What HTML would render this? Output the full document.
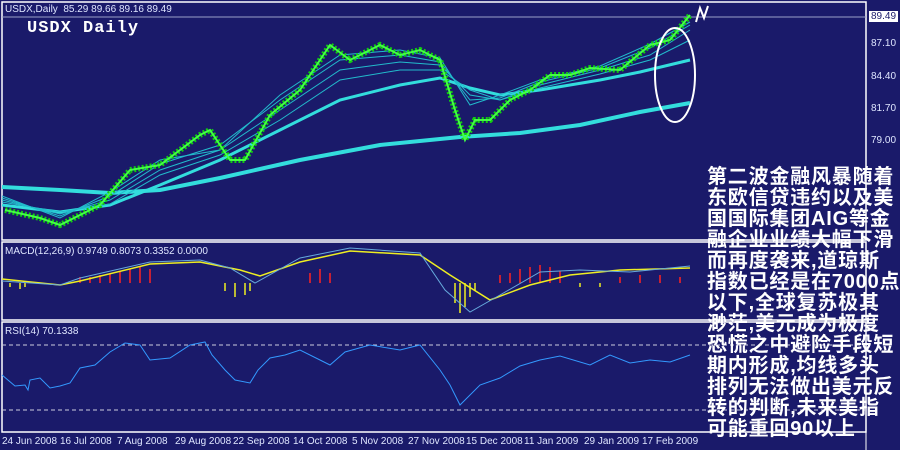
<!DOCTYPE html>
<html><head><meta charset="utf-8"><style>
html,body{margin:0;padding:0;background:#1a1a6a;width:900px;height:450px;overflow:hidden;position:relative}
.t{position:absolute;font-family:"Liberation Sans",sans-serif;color:#dfe6ff;font-size:10px;white-space:nowrap}
.cn{position:absolute;left:707px;top:167px;font-family:"Liberation Sans","WenQuanYi Zen Hei","Noto Sans CJK SC",sans-serif;font-size:20px;line-height:21px;color:#fff;font-weight:bold;letter-spacing:0.8px;white-space:nowrap}
</style></head><body>
<svg width="900" height="450" style="position:absolute;left:0;top:0">
<g fill="none" stroke="#fff" stroke-width="1.5">
<rect x="2" y="2" width="864" height="238"/>
<rect x="2" y="242" width="864" height="78"/>
<rect x="2" y="322" width="864" height="110"/>
</g>
<line x1="2" y1="17" x2="866" y2="17" stroke="#9aa0c8"/>
<polyline fill="none" stroke="#3dd" stroke-width="4" points="2,187 60,190 110,193 160,190 220,178 300,160 380,145 460,137 520,133 580,125 640,112 690,103"/>
<polyline fill="none" stroke="#3dd" stroke-width="3" points="2,205 60,212 110,205 160,185 220,160 280,130 340,100 400,85 440,78 470,88 500,95 540,90 600,80 640,72 690,60"/>
<g fill="none" stroke="#2bc" stroke-width="1">
<polyline points="2,200 60,214 110,200 160,170 220,150 280,110 340,70 400,62 440,65 470,95 500,100 540,85 600,70 650,55 690,30"/>
<polyline points="2,198 60,216 110,196 160,164 220,145 280,100 340,60 400,55 440,62 470,100 500,98 540,82 600,68 650,48 690,25"/>
<polyline points="2,196 60,218 110,192 160,160 220,150 280,95 340,55 400,50 440,58 470,105 500,95 540,80 600,66 650,44 690,22"/>
<polyline points="2,202 60,212 110,204 160,175 220,155 280,120 340,80 400,70 440,70 470,90 500,100 540,88 600,74 650,60 690,40"/>
</g>
<polyline fill="none" stroke="#1c1" stroke-width="6" stroke-dasharray="2 2" points="5,210 40,218 60,225 100,205 130,170 160,165 200,135 210,130 230,160 245,160 270,115 300,90 330,45 350,60 380,45 400,55 420,50 440,60 455,110 465,140 475,120 490,120 510,100 530,90 550,75 570,75 590,68 620,70 650,45 670,40 690,15"/>
<polyline fill="none" stroke="#4f4" stroke-width="2" points="5,210 40,218 60,225 100,205 130,170 160,165 200,135 210,130 230,160 245,160 270,115 300,90 330,45 350,60 380,45 400,55 420,50 440,60 455,110 465,140 475,120 490,120 510,100 530,90 550,75 570,75 590,68 620,70 650,45 670,40 690,15"/>
<ellipse cx="675" cy="75" rx="20" ry="47" fill="none" stroke="#fff" stroke-width="2"/>
<path d="M696,22 L700,8 L704,18 L708,6" fill="none" stroke="#fff" stroke-width="2"/>
<g stroke="#f22" stroke-width="1.5">
<path d="M80,283v-6M90,283v-6M100,283v-8M110,283v-10M120,283v-12M130,283v-14M140,283v-16M150,283v-14M310,283v-10M320,283v-14M330,283v-10M500,283v-8M510,283v-10M520,283v-14M530,283v-16M540,283v-18M550,283v-16M560,283v-12M620,283v-6M640,283v-8M660,283v-8M680,283v-6"/>
</g>
<g stroke="#ee2" stroke-width="1.5">
<path d="M10,283v4M20,283v6M25,283v4M225,283v8M235,283v14M245,283v12M250,283v8M455,283v20M460,283v30M465,283v24M470,283v14M475,283v8M580,283v4M600,283v4"/>
</g>
<polyline fill="none" stroke="#ee2" stroke-width="1.5" points="2,279 60,285 80,281 150,264 200,262 240,270 260,276 300,262 350,251 420,255 450,275 490,300 530,285 570,275 620,270 690,268"/>
<polyline fill="none" stroke="#6ad" stroke-width="1" points="2,281 60,285 80,278 150,262 200,260 230,268 255,283 300,258 350,248 420,253 445,290 470,312 500,295 540,272 580,270 630,272 690,266"/>
<g stroke="#ccd" stroke-dasharray="4 3" stroke-width="1"><line x1="2" y1="345" x2="866" y2="345"/><line x1="2" y1="410" x2="866" y2="410"/></g>
<polyline fill="none" stroke="#39f" stroke-width="1" points="2,375 15,386 25,385 28,390 30,380 40,378 50,388 60,386 70,383 80,368 95,365 110,352 125,343 140,345 150,360 170,358 190,345 205,342 212,355 225,370 235,380 250,383 258,370 270,358 285,355 300,350 320,360 330,365 345,352 370,345 400,350 420,345 440,370 450,385 460,405 480,385 500,378 520,366 540,360 560,356 590,365 610,355 630,363 650,360 670,362 690,355"/>
<line x1="866" y1="432" x2="866" y2="450" stroke="#fff"/>
</svg>
<div class="t" style="left:5px;top:4px">USDX,Daily &nbsp;85.29 89.66 89.16 89.49</div>
<div class="t" style="left:27px;top:19px;font-family:'Liberation Mono',monospace;font-size:17px;font-weight:bold;color:#fff;letter-spacing:1px">USDX Daily</div>
<div class="t" style="left:5px;top:246px">MACD(12,26,9) 0.9749 0.8073 0.3352 0.0000</div>
<div class="t" style="left:5px;top:326px">RSI(14) 70.1338</div>
<div class="t" style="left:871px;top:38px">87.10</div>
<div class="t" style="left:871px;top:71px">84.40</div>
<div class="t" style="left:871px;top:103px">81.70</div>
<div class="t" style="left:871px;top:135px">79.00</div>
<div class="t" style="left:869px;top:11px;background:#fff;color:#1a1a6a;padding:0 2px">89.49</div>
<div class="t" style="left:2px;top:436px">24 Jun 2008</div>
<div class="t" style="left:60px;top:436px">16 Jul 2008</div>
<div class="t" style="left:117px;top:436px">7 Aug 2008</div>
<div class="t" style="left:175px;top:436px">29 Aug 2008</div>
<div class="t" style="left:233px;top:436px">22 Sep 2008</div>
<div class="t" style="left:293px;top:436px">14 Oct 2008</div>
<div class="t" style="left:352px;top:436px">5 Nov 2008</div>
<div class="t" style="left:408px;top:436px">27 Nov 2008</div>
<div class="t" style="left:466px;top:436px">15 Dec 2008</div>
<div class="t" style="left:524px;top:436px">11 Jan 2009</div>
<div class="t" style="left:584px;top:436px">29 Jan 2009</div>
<div class="t" style="left:642px;top:436px">17 Feb 2009</div>
<div class="cn">第二波金融风暴随着<br>东欧信贷违约以及美<br>国国际集团AIG等金<br>融企业业绩大幅下滑<br>而再度袭来,道琼斯<br>指数已经是在7000点<br>以下,全球复苏极其<br>渺茫,美元成为极度<br>恐慌之中避险手段短<br>期内形成,均线多头<br>排列无法做出美元反<br>转的判断,未来美指<br>可能重回90以上</div>
</body></html>
